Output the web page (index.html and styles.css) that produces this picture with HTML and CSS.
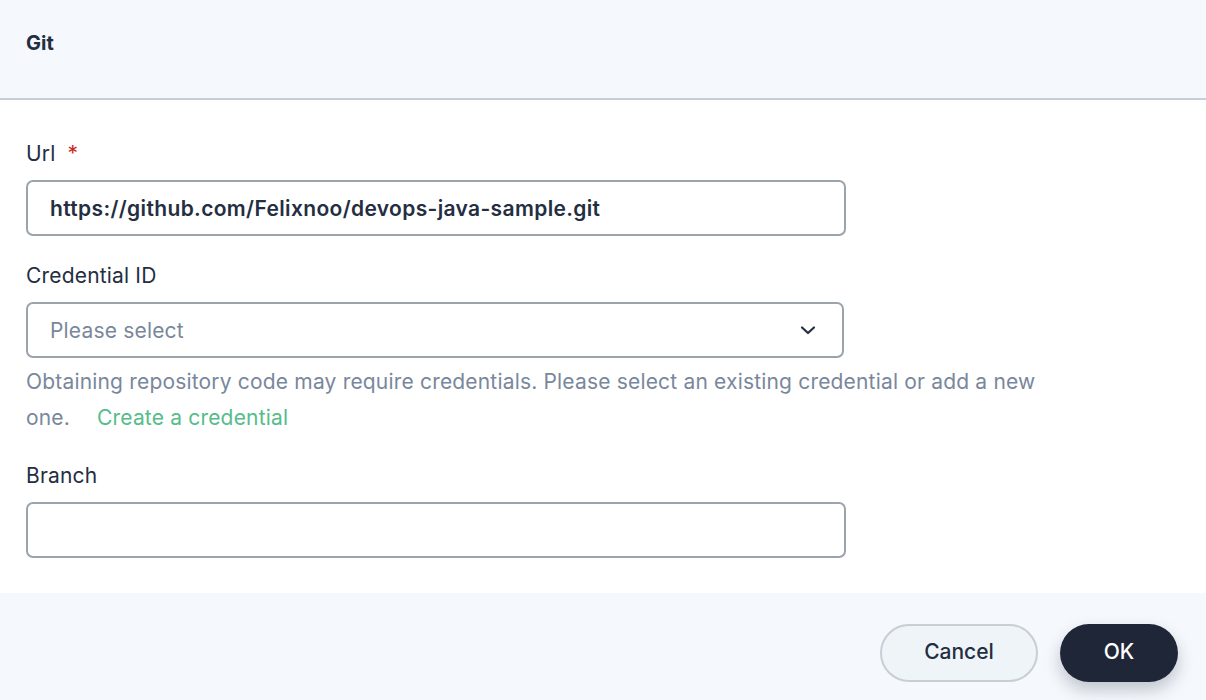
FILE: index.html
```html
<!DOCTYPE html>
<html>
<head>
<meta charset="utf-8">
<link rel="stylesheet" href="styles.css">
</head>
<body>
<div class="dialog">
  <div class="header"><span class="title">Git</span></div>
  <div class="body">
    <div class="field">
      <label class="label">Url <span class="req">*</span></label>
      <div class="input"><span class="value">https://github.com/Felixnoo/devops-java-sample.git</span></div>
    </div>
    <div class="field">
      <label class="label">Credential ID</label>
      <div class="input select">
        <span class="placeholder">Please select</span>
        <svg class="chev" width="20" height="20" viewBox="0 0 20 20"><path d="M4 7.5 L10 13 L16 7.5" fill="none" stroke="#242e42" stroke-width="2.2" stroke-linecap="round" stroke-linejoin="round"/></svg>
      </div>
      <div class="hint">Obtaining repository code may require credentials. Please select an existing credential or add a new one.<a class="link">Create a credential</a></div>
    </div>
    <div class="field">
      <label class="label">Branch</label>
      <div class="input"></div>
    </div>
  </div>
  <div class="footer">
    <button class="btn cancel">Cancel</button>
    <button class="btn ok">OK</button>
  </div>
</div>
</body>
</html>
```
FILE: styles.css
```css
* { box-sizing: border-box; }
html, body { margin: 0; padding: 0; }
body {
  font-family: Inter, "Liberation Sans", sans-serif;
  color: #242e42;
  background: #fff;
  width: 1206px;
  height: 700px;
  overflow: hidden;
  letter-spacing: 0.18px;
}
.dialog { display: flex; flex-direction: column; height: 700px; }
.header {
  height: 100px;
  background: #f5f8fc;
  border-bottom: 2px solid #c7ced6;
  padding: 30px 26px 0;
}
.title { font-size: 20px; font-weight: 700; line-height: 26px; letter-spacing: 0; }
.body {
  padding: 38px 26px 0;
  height: 493px;
  display: flex;
  flex-direction: column;
}
.field { display: flex; flex-direction: column; margin-bottom: 24px; }
.label { font-size: 21px; line-height: 28px; padding-top: 2px; margin-bottom: 12px; color: #242e42; }
.req { color: #ca2621; margin-left: 6px; }
.input {
  width: 820px;
  height: 56px;
  border: 2px solid #9ba3ad;
  border-radius: 7px;
  display: flex;
  align-items: center;
  padding: 0 22px;
  font-size: 21px;
}
.value { font-weight: 600; color: #242e42; letter-spacing: 0.35px; }
.select { width: 818px; justify-content: space-between; padding-right: 24px; }
.placeholder { color: #79879c; }
.chev { display: block; }
.hint {
  width: 1040px;
  font-size: 21px;
  line-height: 36px;
  color: #79879c;
  margin-top: 6px;
  margin-bottom: 0;
}
.link { display: inline-block; color: #55bc8a; margin-left: 27px; }
.footer {
  flex: 1;
  background: #f5f8fc;
  display: flex;
  justify-content: flex-end;
  align-items: flex-start;
  padding: 31px 28px 0 0;
  gap: 22px;
}
.btn {
  font-family: Inter, "Liberation Sans", sans-serif;
  font-size: 21px;
  height: 58px;
  border-radius: 29px;
  padding: 0 0 3px;
}
.cancel {
  width: 158px;
  background: #eff4f9;
  border: 2px solid #c7ced6;
  color: #242e42;
  font-weight: 500;
}
.ok {
  width: 118px;
  background: #1f2637;
  border: none;
  color: #fff;
  font-weight: 500;
  box-shadow: 0 8px 16px rgba(36, 46, 66, 0.25);
}
```
